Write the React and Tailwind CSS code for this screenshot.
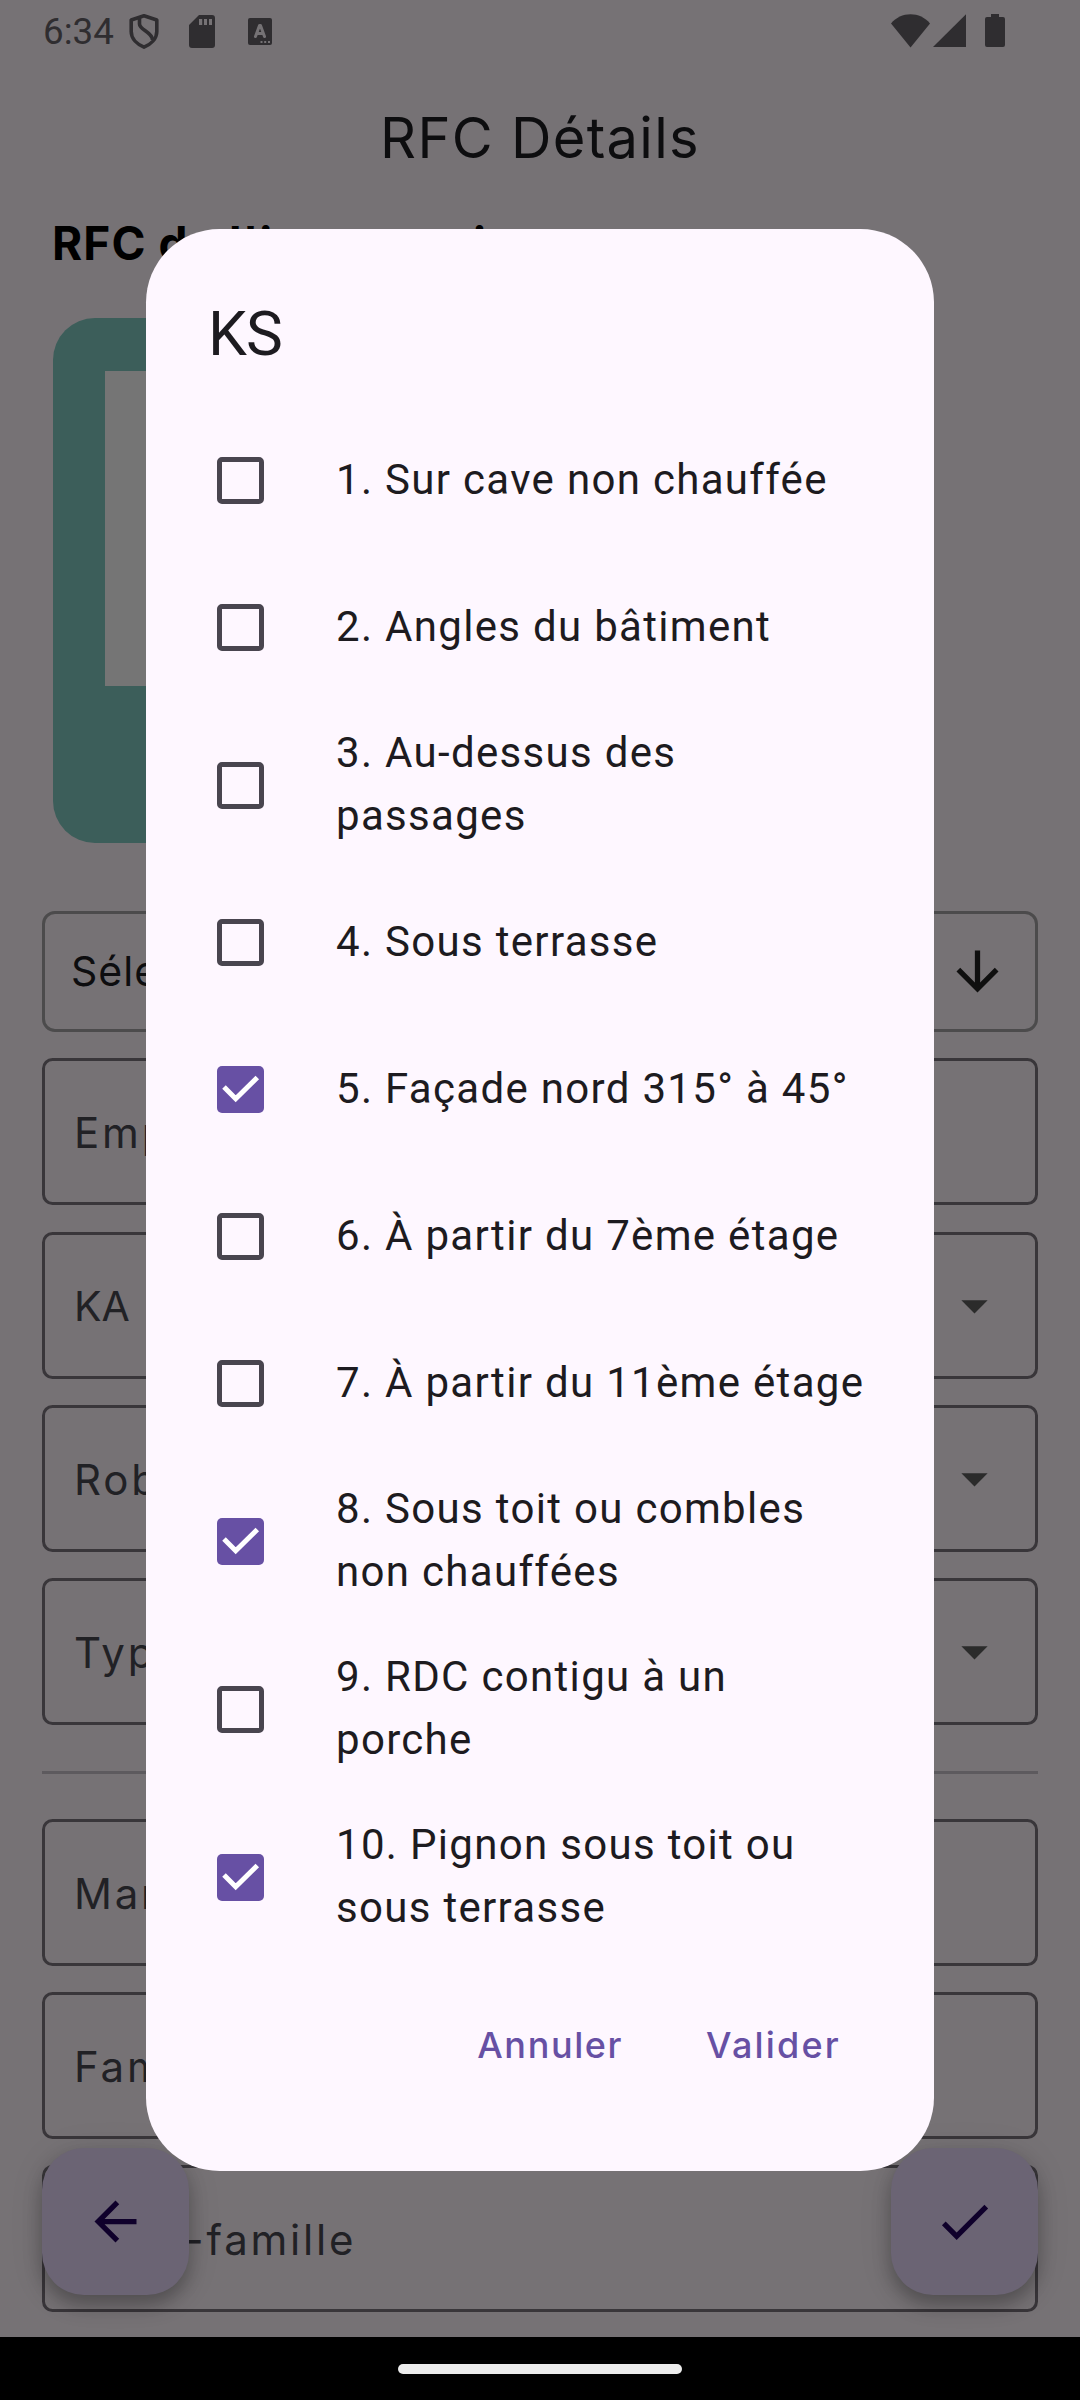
const OPTIONS = [
  { lines: ["1. Sur cave non chauffée"], checked: false },
  { lines: ["2. Angles du bâtiment"], checked: false },
  { lines: ["3. Au-dessus des", "passages"], checked: false },
  { lines: ["4. Sous terrasse"], checked: false },
  { lines: ["5. Façade nord 315° à 45°"], checked: true },
  { lines: ["6. À partir du 7ème étage"], checked: false },
  { lines: ["7. À partir du 11ème étage"], checked: false },
  { lines: ["8. Sous toit ou combles", "non chauffées"], checked: true },
  { lines: ["9. RDC contigu à un", "porche"], checked: false },
  { lines: ["10. Pignon sous toit ou", "sous terrasse"], checked: true },
];

function StatusBar() {
  return (
    <header className="flex h-[63px] shrink-0 items-start pl-[43px] font-[Roboto,sans-serif] text-[#2f2d30]">
      <span className="mt-[10px] text-[36.75px] leading-[44px]">6:34</span>
      <svg className="mt-[14px] ml-[15px] h-[35px] w-[30px]" viewBox="0 0 30 35" fill="none" stroke="currentColor" strokeWidth="3.6" strokeLinejoin="round">
        <path d="M15 1.800 27.800 6v11.500C27.800 25 21.500 30.500 15 33.200 8.500 30.500 2.200 25 2.200 17.500V6Z" />
        <path d="M10.500 3.500v6.500c0 6 13 8 13 16" />
      </svg>
      <svg className="mt-[15px] ml-[30px] h-[33px] w-[26px]" viewBox="0 0 26 33" fill="currentColor" fillRule="evenodd">
        <path d="M10 0H23a3 3 0 0 1 3 3V30a3 3 0 0 1-3 3H3a3 3 0 0 1-3-3V10ZM10 4v6h3.200V4Zm5 0v6h3V4Zm5 0v6h3V4Z" />
      </svg>
      <svg className="mt-[18px] ml-[33px] h-[27px] w-[24px]" viewBox="0 0 24 27">
        <rect width="24" height="27" rx="2" fill="currentColor" />
        <path d="M7.500 18.500 11.500 7.500h1l4 11M9 15.500h6" fill="none" stroke="#757275" strokeWidth="3" strokeLinecap="round" strokeLinejoin="round" />
        <path d="M12.500 23h2v2h-2zM16.200 23h2v2h-2zM20 23h2v2h-2z" fill="#757275" />
      </svg>
      <div className="mt-[14px] mr-[75px] ml-auto flex">
        <svg className="h-[34px] w-[39px]" viewBox="0 0 39 34" fill="currentColor">
          <path d="M19.500 33.500 0 9.500C5 3.500 12 .3 19.500.3S34 3.500 39 9.500Z" />
        </svg>
        <svg className="ml-[3px] h-[34px] w-[33px]" viewBox="0 0 33 34" fill="currentColor">
          <path d="M0 33 33 .3V33Z" />
        </svg>
        <svg className="ml-[19px] h-[34px] w-[20px]" viewBox="0 0 20 34" fill="currentColor">
          <path d="M6 0h8v3h4a2 2 0 0 1 2 2v26a2 2 0 0 1-2 2H2a2 2 0 0 1-2-2V5a2 2 0 0 1 2-2h4Z" />
        </svg>
      </div>
    </header>
  );
}

function Field({ label, dropdown, tight }) {
  return (
    <div className="flex h-[147px] shrink-0 items-center justify-between rounded-[10.500px] border-3 border-[#39363a] pr-[29px] pl-[29px]">
      <span
        className={
          tight
            ? "pt-[2px] text-[41px] leading-[63px] text-[#212125]"
            : "pt-[2px] text-[42px] leading-[63px] tracking-[2.8px] text-[#212125]"
        }
      >
        {label}
      </span>
      {dropdown && (
        <svg className="h-[63px] w-[63px]" viewBox="0 0 24 24" fill="#2b2b2b">
          <path d="m7 10 5 5 5-5z" />
        </svg>
      )}
    </div>
  );
}

function Checkbox({ checked }) {
  if (!checked) {
    return <span className="h-[47px] w-[47px] shrink-0 rounded-[5px] border-[5px] border-[#49454f]" />;
  }
  return (
    <span className="h-[47px] w-[47px] shrink-0 rounded-[5px] bg-[#6750a4]">
      <svg className="h-[47px] w-[47px]" viewBox="0 0 47 47" fill="none" stroke="#fff" strokeWidth="5">
        <path d="M7 21 18.700 32.700 40.300 11.500" />
      </svg>
    </span>
  );
}

function Fab({ children }) {
  return (
    <button className="flex h-[147px] w-[147px] items-center justify-center rounded-[42px] bg-[#6b6474] shadow-[0_10px_18px_rgba(0,0,0,0.26),0_4px_34px_rgba(0,0,0,0.1)]">
      <svg className="h-[63px] w-[63px]" viewBox="0 0 24 24" fill="#0f002b">
        {children}
      </svg>
    </button>
  );
}

function KsDialog() {
  return (
    <section className="absolute top-[229px] left-[146px] flex h-[1942px] w-[788px] flex-col rounded-[73.500px] bg-[#fef7ff] px-[63px] pt-[63px] font-[Roboto,sans-serif] text-[#1d1b20]">
      <h2 className="-ml-px h-[115px] text-[62px] leading-[84px] tracking-[-1px]">KS</h2>
      <ul>
        {OPTIONS.map((option) => (
          <li
            key={option.lines[0]}
            className={
              option.lines.length > 1
                ? "flex h-[168px] items-center pl-[8px]"
                : "flex h-[147px] items-center pl-[8px]"
            }
          >
            <Checkbox checked={option.checked} />
            <span className="ml-[72px] pb-[3px] text-[42px] leading-[63px] tracking-[1.3125px] whitespace-nowrap">
              {option.lines.map((line) => (
                <span key={line} className="block">{line}</span>
              ))}
            </span>
          </li>
        ))}
      </ul>
      <div className="mt-[53px] flex justify-end gap-[83px] pr-[30px] font-[Inter,sans-serif] text-[36px] leading-[63px] font-medium text-[#6750a4]">
        <button className="tracking-[1.6px]">Annuler</button>
        <button className="tracking-[2.2px]">Valider</button>
      </div>
    </section>
  );
}

export default function App() {
  return (
    <div className="relative flex h-[2400px] w-[1080px] flex-col overflow-hidden bg-[#767275] font-[Inter,sans-serif]">
      <StatusBar />
      <h1 className="mt-[41px] text-center text-[56px] leading-[68px] tracking-[1.3px] text-[#0d0d0f]">RFC Détails</h1>
      <h2 className="mt-[40px] h-[64px] pl-[52px] text-[46px] leading-[63px] font-bold tracking-[1.1px] text-black">RFC de l'intervention</h2>
      <div className="mt-[42px] ml-[53px] h-[525px] w-[525px] shrink-0 rounded-[42px] bg-[#3c5e5a] px-[52px] pt-[53px]">
        <div className="h-[315px] bg-[#757575]" />
      </div>
      <main className="mt-[68px] flex flex-col gap-[26.250px] px-[42px]">
        <div className="flex h-[121px] shrink-0 items-center justify-between rounded-[13px] border-3 border-[#4c4b4c] pr-[26px] pl-[26px]">
          <span className="text-[41px] leading-[63px] tracking-[1px] text-[#0d0d0f]">Sélectionner</span>
          <svg className="h-[63px] w-[63px]" viewBox="0 0 24 24" fill="#0f0f0f">
            <path d="m20 12-1.410-1.410L13 16.170V4h-2v12.170l-5.580-5.590L4 12l8 8 8-8z" />
          </svg>
        </div>
        <Field label="Emplacement" />
        <Field label="KA" dropdown tight />
        <Field label="Robinet" dropdown />
        <Field label="Type" dropdown />
        <hr className="mt-[20px] mb-[18px] h-[3px] shrink-0 border-0 bg-[#5d5a5e]" />
        <Field label="Marque" />
        <Field label="Famille" />
        <Field label="Sous-famille" />
      </main>

      <div className="absolute top-[2148px] right-[42px] left-[42px] flex justify-between">
        <Fab>
          <path d="M20 11H7.830l5.590-5.590L12 4l-8 8 8 8 1.410-1.410L7.830 13H20v-2z" />
        </Fab>
        <Fab>
          <path d="M9 16.170 4.830 12l-1.420 1.410L9 19 21 7l-1.410-1.410z" />
        </Fab>
      </div>

      <KsDialog />

      <footer className="absolute bottom-0 left-0 flex h-[63px] w-full justify-center bg-black pt-[27px]">
        <span className="h-[10px] w-[284px] rounded-full bg-[#ececec]" />
      </footer>
    </div>
  );
}
